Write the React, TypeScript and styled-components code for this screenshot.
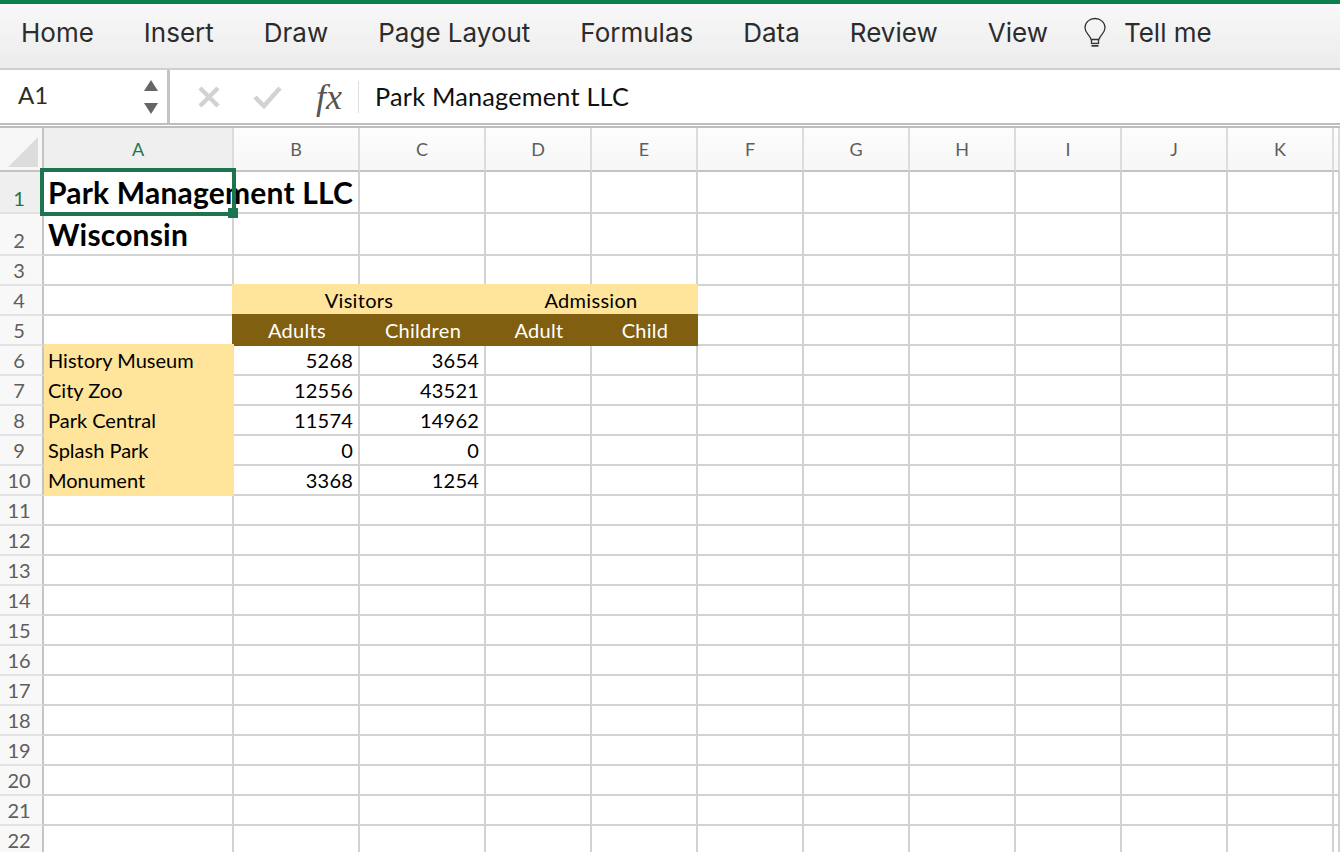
import React from 'react';
import styled, { createGlobalStyle } from 'styled-components';

const GREEN = '#1d7550';
const GRID = '#d2d2d2';
const YELLOW = '#ffe49b';
const BROWN = '#805f10';

const COLUMNS = ['A', 'B', 'C', 'D', 'E', 'F', 'G', 'H', 'I', 'J', 'K'];
const TABS = ['Home', 'Insert', 'Draw', 'Page Layout', 'Formulas', 'Data', 'Review', 'View'];
const ROW_COUNT = 22;

const places: [string, number, number][] = [
  ['History Museum', 5268, 3654],
  ['City Zoo', 12556, 43521],
  ['Park Central', 11574, 14962],
  ['Splash Park', 0, 0],
  ['Monument', 3368, 1254],
];

const BulbIcon = () => (
  <svg width="24" height="30" viewBox="0 0 24 30" fill="none" stroke="#333" strokeWidth="1.3">
    <path d="M12 1.500C6.500 1.500 2 5.500 2 10.500c0 2.800 1.200 4.700 3 6.800 1.500 1.800 2.600 3.300 3.200 5.200h7.600c.6-1.900 1.700-3.400 3.200-5.200 1.800-2.100 3-4 3-6.800C22 5.500 17.500 1.500 12 1.500z" />
    <path d="M8.500 22.500v3.800h7v-3.800" />
    <path d="M8.500 28.800h7" strokeWidth="1.800" />
  </svg>
);

const CancelIcon = () => (
  <svg width="24" height="24" viewBox="0 0 24 24" fill="none" stroke="#d2d2d2" strokeWidth="4.500">
    <path d="M3 3l18 18M21 3L3 21" />
  </svg>
);

const CheckIcon = () => (
  <svg width="30" height="24" viewBox="0 0 30 24" fill="none" stroke="#d2d2d2" strokeWidth="4.500">
    <path d="M2 12l9 9L27 3" />
  </svg>
);

const SpinnerIcon = () => (
  <svg width="16" height="34" viewBox="0 0 16 34" fill="#666">
    <path d="M8 0l7 11H1z" />
    <path d="M8 34L1 23h14z" />
  </svg>
);

const CornerIcon = () => (
  <svg width="30" height="30" viewBox="0 0 30 30" fill="#dcdcdc">
    <path d="M30 0v30H0z" />
  </svg>
);

const App = () => {
  const rows = Array.from({ length: ROW_COUNT }, (_, i) => i + 1);

  const renderCells = (row: number) => {
    if (row === 1 || row === 2) {
      return (
        <>
          <TitleCell>{row === 1 ? 'Park Management LLC' : 'Wisconsin'}</TitleCell>
          {COLUMNS.slice(1).map((c) => <Cell key={c} />)}
          <Cell />
        </>
      );
    }
    if (row === 4) {
      return (
        <>
          <Cell />
          <BandCell $span={2}>Visitors</BandCell>
          <BandCell $span={2}>Admission</BandCell>
          {COLUMNS.slice(5).map((c) => <Cell key={c} />)}
          <Cell />
        </>
      );
    }
    if (row === 5) {
      return (
        <>
          <Cell />
          <DarkCell>Adults</DarkCell>
          <DarkCell>Children</DarkCell>
          <DarkCell>Adult</DarkCell>
          <DarkCell>Child</DarkCell>
          {COLUMNS.slice(5).map((c) => <Cell key={c} />)}
          <Cell />
        </>
      );
    }
    if (row >= 6 && row <= 10) {
      const [name, adults, children] = places[row - 6];
      return (
        <>
          <LabelCell>{name}</LabelCell>
          <NumberCell>{adults}</NumberCell>
          <NumberCell>{children}</NumberCell>
          {COLUMNS.slice(3).map((c) => <Cell key={c} />)}
          <Cell />
        </>
      );
    }
    return (
      <>
        {COLUMNS.map((c) => <Cell key={c} />)}
        <Cell />
      </>
    );
  };

  return (
    <Page>
      <GlobalStyle />
      <Ribbon>
        {TABS.map((t) => <Tab key={t}>{t}</Tab>)}
        <TellMe>
          <BulbIcon />
          <Tab>Tell me</Tab>
        </TellMe>
      </Ribbon>
      <FormulaBar>
        <NameBox>
          <NameText>A1</NameText>
          <SpinnerIcon />
        </NameBox>
        <FormulaButtons>
          <CancelIcon />
          <CheckIcon />
          <FxLabel>fx</FxLabel>
        </FormulaButtons>
        <FormulaText>Park Management LLC</FormulaText>
      </FormulaBar>
      <Sheet>
        <Corner><CornerIcon /></Corner>
        {COLUMNS.map((c) => <ColumnHead key={c} $active={c === 'A'}>{c}</ColumnHead>)}
        <ColumnHead />
        {rows.map((row) => (
          <React.Fragment key={row}>
            <RowHead $active={row === 1}>{row}</RowHead>
            {renderCells(row)}
          </React.Fragment>
        ))}
        <Selection><Handle /></Selection>
      </Sheet>
    </Page>
  );
};

export default App;

const GlobalStyle = createGlobalStyle`
  html, body {
    margin: 0;
    padding: 0;
    background: #fff;
  }
`;

const Page = styled.div`
  width: 1340px;
  height: 852px;
  overflow: hidden;
  font-family: Lato, "Open Sans", sans-serif;
  color: #000;
`;

const Ribbon = styled.div`
  box-sizing: border-box;
  height: 70px;
  padding: 0 0 8px 21px;
  display: flex;
  align-items: center;
  gap: 50px;
  border-top: 4px solid #0b7f4c;
  border-bottom: 2px solid #cfcfcf;
  background: linear-gradient(#f8f8f8, #ececec);
`;

const Tab = styled.span`
  font-family: Inter, sans-serif;
  font-size: 26px;
  color: #2c2c2c;
`;

const TellMe = styled.div`
  display: flex;
  align-items: center;
  gap: 17px;
  margin-left: -15px;
`;

const FormulaBar = styled.div`
  box-sizing: border-box;
  height: 58px;
  display: flex;
  align-items: center;
  border-bottom: 5px double #bdbdbd;
  background: #fff;
`;

const NameBox = styled.div`
  box-sizing: border-box;
  width: 170px;
  height: 100%;
  padding: 0 8px 0 18px;
  display: flex;
  align-items: center;
  justify-content: space-between;
  border-right: 3px solid #c4c4c4;
`;

const NameText = styled.span`
  padding-bottom: 5px;
  font-size: 24px;
  color: #2c2c2c;
`;

const FormulaButtons = styled.div`
  box-sizing: border-box;
  width: 189px;
  height: 32px;
  padding-left: 27px;
  display: flex;
  align-items: center;
  gap: 32px;
  border-right: 1px solid #dedede;
`;

const FxLabel = styled.span`
  margin-left: 1px;
  font-family: "Liberation Serif", serif;
  font-style: italic;
  font-size: 36px;
  color: #555;
`;

const FormulaText = styled.span`
  margin-left: 16px;
  padding-bottom: 1px;
  font-size: 25.300px;
  letter-spacing: 0.2px;
  color: #111;
`;

const Sheet = styled.div`
  position: relative;
  display: grid;
  grid-template-columns: 44px 190px 126px 126px 106px 106px repeat(6, 106px) 6px;
  grid-template-rows: 44px 42px 42px repeat(20, 30px);
`;

const Corner = styled.div`
  box-sizing: border-box;
  padding: 9px 5px 0 8px;
  background: #f7f7f7;
  border-right: 2px solid #c4c4c4;
  border-bottom: 2px solid #c4c4c4;
`;

const ColumnHead = styled.div<{ $active?: boolean }>`
  box-sizing: border-box;
  display: flex;
  align-items: center;
  justify-content: center;
  font-size: 18px;
  color: ${(p) => (p.$active ? GREEN : '#5e5e5e')};
  background: ${(p) => (p.$active ? '#efefef' : 'linear-gradient(#fdfdfd, #f6f6f6)')};
  border-right: 2px solid #dcdcdc;
  border-bottom: 2px solid #c4c4c4;
`;

const RowHead = styled.div<{ $active?: boolean }>`
  box-sizing: border-box;
  display: flex;
  align-items: flex-end;
  justify-content: center;
  padding: 0 4px 2px 0;
  font-size: 20px;
  line-height: 24px;
  color: ${(p) => (p.$active ? GREEN : '#5e5e5e')};
  background: ${(p) => (p.$active ? '#efefef' : '#f8f8f8')};
  border-right: 2px solid #c4c4c4;
  border-bottom: 2px solid #e2e2e2;
`;

const Cell = styled.div`
  box-sizing: border-box;
  border-right: 2px solid ${GRID};
  border-bottom: 2px solid ${GRID};
`;

const TitleCell = styled(Cell)`
  padding: 0 0 2px 4px;
  display: flex;
  align-items: flex-end;
  white-space: nowrap;
  font-size: 30px;
  font-weight: 700;
  line-height: 36px;
  letter-spacing: 0.2px;
  overflow: visible;
`;

const BandCell = styled.div<{ $span: number }>`
  grid-column: span ${(p) => p.$span};
  margin: -2px 0 0 -2px;
  display: flex;
  align-items: center;
  justify-content: center;
  font-size: 20px;
  letter-spacing: 0.3px;
  background: ${YELLOW};
`;

const DarkCell = styled.div`
  margin-top: -2px;
  display: flex;
  align-items: center;
  justify-content: center;
  font-size: 20px;
  letter-spacing: 0.3px;
  color: #fff;
  background: ${BROWN};
  box-shadow: -2px 0 0 ${BROWN};
`;

const LabelCell = styled.div`
  margin-top: -2px;
  padding-left: 4px;
  display: flex;
  align-items: center;
  font-size: 20px;
  background: ${YELLOW};
`;

const NumberCell = styled(Cell)`
  padding-right: 5px;
  display: flex;
  align-items: center;
  justify-content: flex-end;
  font-size: 20px;
  letter-spacing: 0.2px;
`;

const Selection = styled.div`
  position: absolute;
  top: 40px;
  left: 40px;
  box-sizing: border-box;
  width: 196px;
  height: 48px;
  border: 4px solid ${GREEN};
`;

const Handle = styled.div`
  position: absolute;
  right: -6px;
  bottom: -6px;
  width: 10px;
  height: 10px;
  background: ${GREEN};
`;
